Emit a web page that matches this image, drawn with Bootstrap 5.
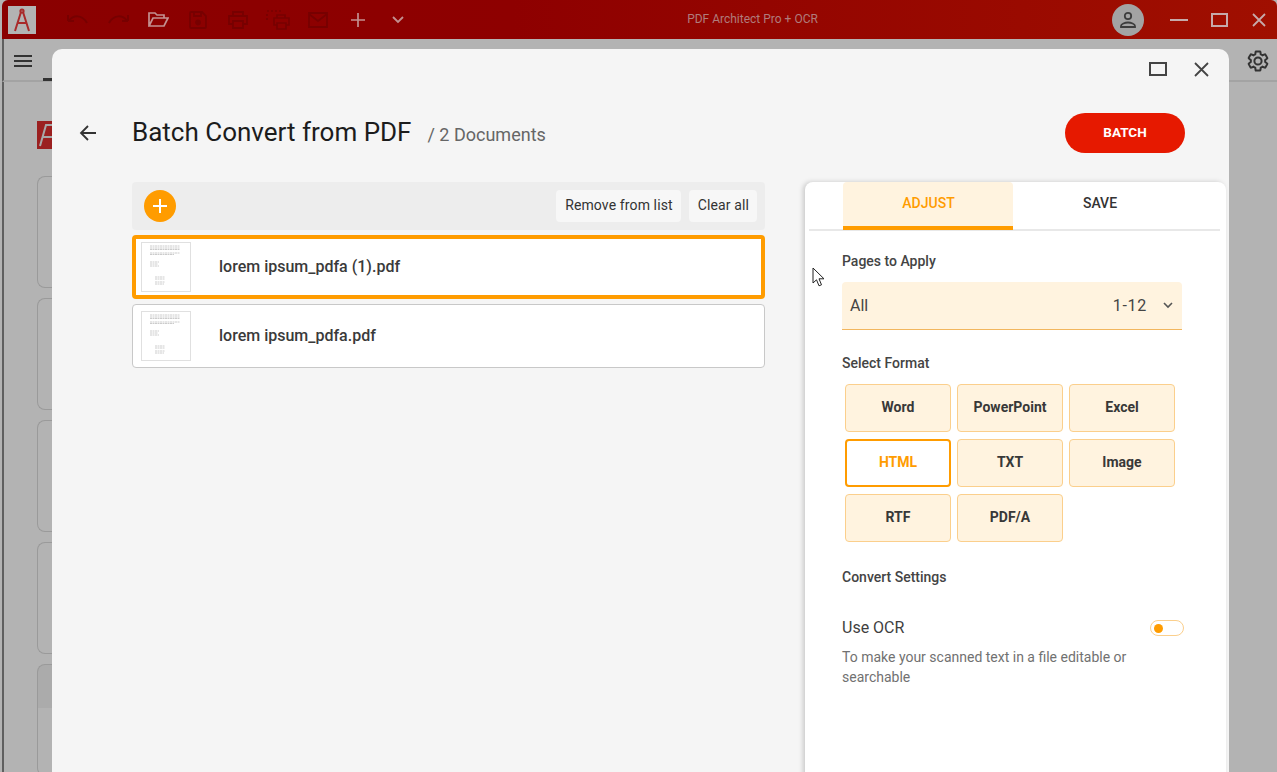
<!DOCTYPE html>
<html lang="en">
<head>
<meta charset="utf-8">
<title>PDF Architect</title>
<link rel="stylesheet" href="https://cdn.jsdelivr.net/npm/bootstrap@5.3.0/dist/css/bootstrap.min.css">
<style>
html,body{height:100%;overflow:hidden}
body{font-family:Roboto,"Liberation Sans",sans-serif;background:#b3b3b3;color:#2b2b2b}
.appwin{width:1277px;height:772px;position:relative;overflow:hidden;background:#b3b3b3}
.titlebar{height:39px;background:linear-gradient(90deg,#8a0000 0,#8e0000 40%,#a00f00 100%);border-radius:6px 6px 0 0;margin-left:2px;padding-left:6px}
.logo-box{width:28px;height:28px;background:#b3b3b3;flex:none}
.tb-first{margin-left:22px}
.tb-icon{width:40px;height:39px;flex:none}
.tb-title{position:absolute;left:228px;right:0;top:0;height:39px;line-height:38px;text-align:center;font-size:12px;color:#b07c7c}
.avatar{width:32px;height:32px;border-radius:50%;background:#a3a3a3;flex:none;margin-right:15px}
.tb-right{margin-right:-2px}
.winbtn{width:40px;height:39px;flex:none}
.subbar{height:43px;border-bottom:2px solid #a3a3a3;margin-left:2px;border-left:2px solid #5f5f5f;padding:2px 7px 0 9px}
.bgbody{border-left:2px solid #5f5f5f;margin-left:2px;height:690px;padding:39px 0 0 33px;position:relative}
.bg-logo{width:18px;height:28px;background:#9b2020;margin-bottom:27px}
.bg-card{width:40px;height:112px;border:1px solid #9a9a9a;border-right:0;border-radius:8px 0 0 8px;margin-bottom:10px}
.bg-card.shaded{background:linear-gradient(#ababab 0,#ababab 43px,transparent 43px)}
.tab-mark{position:absolute;left:43px;top:78px;width:9px;height:3px;background:#333}
.dlg{position:absolute;left:52px;top:49px;width:1177px;height:740px;background:#f5f5f5;border-radius:10px 10px 0 0}
.dlg-top{height:40px;padding:0 8px 0 0}
.dlg-max{margin-right:3px}
.dlg-head{padding:28px 44px 0 24px;height:68px}
.back-btn{width:24px;height:24px;flex:none;margin:4px 32px 0 0}
.dlg-title{font-size:26px;line-height:30px;color:#1c1c1c;margin:0;font-weight:400}
.dlg-sub{font-size:18px;color:#666;margin-left:16px;margin-top:4px}
.batch-btn{width:120px;height:40px;border-radius:20px;background:#e61900;color:#fff;font-size:13.500px;font-weight:700;border:0;padding:0 0 2px;margin-top:-4px}
.dlg-cols{padding-left:80px;gap:40px;margin-top:25px}
.leftcol{width:633px;flex:none}
.list-top{height:48px;background:#ededed;border-radius:4px;padding:0 8px 0 12px}
.add-btn{width:32px;height:32px;border-radius:50%;background:#ff9c00;flex:none}
.list-act{height:32px;background:#f7f7f7;border-radius:4px;font-size:14px;color:#333;padding:0 8px 0 9px;line-height:30px;letter-spacing:.12px}
.fileitem{background:#fff;border:1px solid #c8c8c8;border-radius:4px;height:64px;margin-top:5px;padding-left:8px;font-size:16px;font-weight:500;color:#3a3a3a}
.fileitem.sel{border:4px solid #ff9c00;padding-left:5px}
.thumbbox{width:50px;height:50px;background:#fff;border:1px solid #e0e0e0;flex:none;margin-right:28px}
.rightpane{width:421px;flex:none;background:#fff;border-radius:8px 8px 0 0;box-shadow:-2px 0 5px rgba(0,0,0,.18);height:620px;padding:0 6px 0 4px}
.tabsrow{height:49px;border-bottom:2px solid #e8e8e8;padding-left:34px}
.tabitem{width:170px;height:48px;line-height:42px;text-align:center;font-size:14px;font-weight:500;color:#333;padding-left:4px}
.tabitem.on{background:#fff3df;color:#ff9c00;border-bottom:4px solid #ff9c00;border-radius:4px 4px 0 0;padding-left:1px}
.pane-body{padding:0 0 0 33px}
.sec-label{font-size:14px;font-weight:500;color:#444;line-height:20px}
.sec-fmt{margin-top:23px}
.sec-gap{margin-top:25px}
.pages-sel{width:340px;height:48px;background:#fff3df;border-bottom:1px solid #f2b65e;border-radius:4px 4px 0 0;padding:0 9px 0 8px;font-size:16px;color:#444;margin-top:11px}
.pages-num{letter-spacing:.7px}
.fmt-grid{display:grid;grid-template-columns:repeat(3,106px);grid-auto-rows:48px;gap:7px 6px;margin:11px 0 0 3px}
.fmt-btn{background:#fff3df;border:1px solid #fbcf8c;border-radius:4px;font-size:14px;font-weight:700;color:#383838;text-align:center;line-height:45px}
.fmt-btn.on{background:#fff;border:2px solid #ff9c00;color:#ff9c00;line-height:43px}
.ocr-row{margin-top:30px;width:342px}
.ocr-lab{font-size:16px;color:#3f3f3f;line-height:22px}
.ocr-sw{width:34px;height:16px;border:1px solid #fbcf8c;border-radius:8px;padding-left:3px;background:#fff;flex:none}
.ocr-dot{width:9px;height:9px;border-radius:50%;background:#ff9c00}
.ocr-desc{font-size:14px;line-height:20px;color:#717171;width:300px}
.cursorsvg{position:absolute;left:812px;top:267px}
</style>
</head>
<body>
<div class="appwin">
  <div class="titlebar d-flex align-items-center">
    <div class="logo-box d-flex align-items-center justify-content-center">
      <svg width="18" height="24" viewBox="0 0 18 24" fill="none" stroke="#a92a2a" stroke-width="2"><circle cx="9" cy="3" r="1.6"/><path d="M8 4 2 23M10 4l6 19M4 15h10"/></svg>
    </div>
    <div class="tb-icon tb-first d-flex align-items-center justify-content-center">
      <svg width="22" height="14" viewBox="0 0 22 14" fill="none" stroke="#770000" stroke-width="2"><path d="M1 8V2M1 8h6M2 8c4-6 13-7 18 2"/></svg>
    </div>
    <div class="tb-icon d-flex align-items-center justify-content-center">
      <svg width="22" height="14" viewBox="0 0 22 14" fill="none" stroke="#770000" stroke-width="2"><path d="M21 8V2M21 8h-6M20 8C16 2 7 1 2 10"/></svg>
    </div>
    <div class="tb-icon d-flex align-items-center justify-content-center">
      <svg width="21" height="16" viewBox="0 0 21 16" fill="none" stroke="#c39090" stroke-width="1.7"><path d="M1 14V1h6l2 2h7v3M1 14l4-8h15l-4 8z"/></svg>
    </div>
    <div class="tb-icon d-flex align-items-center justify-content-center">
      <svg width="18" height="18" viewBox="0 0 18 18" fill="none" stroke="#770000" stroke-width="1.8"><path d="M2 1h11l4 4v11a1 1 0 0 1-1 1H2a1 1 0 0 1-1-1V2a1 1 0 0 1 1-1z"/><path d="M5 1v4h7V1"/><circle cx="9" cy="11.500" r="2" fill="#770000"/></svg>
    </div>
    <div class="tb-icon d-flex align-items-center justify-content-center">
      <svg width="20" height="18" viewBox="0 0 20 18" fill="none" stroke="#770000" stroke-width="1.8"><path d="M5 5V1h10v4M5 13H1V5h18v8h-4"/><path d="M5 10h10v7H5z"/></svg>
    </div>
    <div class="tb-icon d-flex align-items-center justify-content-center">
      <svg width="24" height="20" viewBox="0 0 24 20" fill="none" stroke="#770000" stroke-width="1.7"><path d="M1 1h14M1 4v8" stroke-dasharray="2 2"/><path d="M11 8V5h8v3M11 15H8V8h15v7h-3M11 13h9v6h-9z"/></svg>
    </div>
    <div class="tb-icon d-flex align-items-center justify-content-center">
      <svg width="20" height="16" viewBox="0 0 20 16" fill="none" stroke="#770000" stroke-width="1.8"><path d="M1 1h18v14H1zM1 2l9 7 9-7"/></svg>
    </div>
    <div class="tb-icon d-flex align-items-center justify-content-center">
      <svg width="14" height="14" viewBox="0 0 14 14" stroke="#c39090" stroke-width="1.7"><path d="M7 0v14M0 7h14"/></svg>
    </div>
    <div class="tb-icon d-flex align-items-center justify-content-center">
      <svg width="12" height="8" viewBox="0 0 12 8" fill="none" stroke="#c39090" stroke-width="1.8"><path d="m1 1 5 5 5-5"/></svg>
    </div>
    <div class="tb-title">PDF Architect Pro + OCR</div>
    <div class="tb-right ms-auto d-flex align-items-center">
      <div class="avatar d-flex align-items-center justify-content-center">
        <svg width="18" height="18" viewBox="0 0 18 18" fill="none" stroke="#3d3d3d" stroke-width="1.800"><circle cx="9" cy="5" r="3.200"/><path d="M2 16v-1c0-2 4-3.500 7-3.500s7 1.500 7 3.500v1z"/></svg>
      </div>
      <div class="winbtn d-flex align-items-center justify-content-center">
        <svg width="18" height="2" viewBox="0 0 18 2"><path fill="#c6aaaa" d="M0 0h18v2H0z"/></svg>
      </div>
      <div class="winbtn d-flex align-items-center justify-content-center">
        <svg width="17" height="14" viewBox="0 0 17 14" fill="none" stroke="#c6aaaa" stroke-width="2"><path d="M1 1h15v12H1z"/></svg>
      </div>
      <div class="winbtn d-flex align-items-center justify-content-center">
        <svg width="14" height="14" viewBox="0 0 14 14" stroke="#c6aaaa" stroke-width="1.800"><path d="m1 1 12 12M13 1 1 13"/></svg>
      </div>
    </div>
  </div>

  <div class="subbar d-flex align-items-center justify-content-between">
    <svg width="20" height="14" viewBox="0 0 20 14" fill="#333"><path d="M1 1h18v2H1zM1 6h18v2H1zM1 11h18v2H1z"/></svg>
    <svg width="24" height="24" viewBox="0 0 24 24" fill="none" stroke="#333" stroke-width="2"><path d="M19.140 12.940c.04-.3.06-.61.06-.94 0-.32-.02-.64-.07-.94l2.030-1.580c.18-.14.23-.41.12-.61l-1.920-3.320c-.12-.22-.37-.29-.59-.22l-2.390.96c-.5-.38-1.030-.7-1.620-.94l-.36-2.540c-.04-.24-.24-.41-.48-.41h-3.840c-.24 0-.43.17-.47.41l-.36 2.540c-.59.24-1.130.57-1.620.94l-2.390-.96c-.22-.08-.47 0-.59.22L2.740 8.870c-.12.21-.08.47.12.61l2.030 1.580c-.05.3-.09.63-.09.94s.02.64.07.94l-2.030 1.580c-.18.14-.23.41-.12.61l1.920 3.320c.12.22.37.29.59.22l2.390-.96c.5.38 1.030.7 1.620.94l.36 2.540c.05.24.24.41.48.41h3.840c.24 0 .44-.17.47-.41l.36-2.540c.59-.24 1.130-.56 1.620-.94l2.390.96c.22.08.47 0 .59-.22l1.920-3.320c.12-.22.07-.47-.12-.61l-2.010-1.580zM12 15.600c-1.980 0-3.600-1.620-3.600-3.600s1.620-3.600 3.600-3.600 3.600 1.620 3.600 3.600-1.620 3.600-3.600 3.600z"/></svg>
  </div>
  <div class="tab-mark"></div>

  <div class="bgbody">
    <div class="bg-logo d-flex align-items-center justify-content-center">
      <svg width="18" height="28" viewBox="0 0 18 28" fill="none" stroke="#a8a8a8" stroke-width="2"><path d="M3 25 9 4h6M6 16h9"/></svg>
    </div>
    <div class="bg-card"></div>
    <div class="bg-card"></div>
    <div class="bg-card"></div>
    <div class="bg-card"></div>
    <div class="bg-card shaded"></div>
  </div>

  <div class="dlg">
    <div class="dlg-top d-flex align-items-center justify-content-end">
      <div class="winbtn dlg-max d-flex align-items-center justify-content-center">
        <svg width="18" height="14" viewBox="0 0 18 14" fill="none" stroke="#444" stroke-width="2"><path d="M1 1h16v12H1z"/></svg>
      </div>
      <div class="winbtn d-flex align-items-center justify-content-center">
        <svg width="15" height="15" viewBox="0 0 15 15" stroke="#444" stroke-width="1.800"><path d="m1 1 13 13M14 1 1 14"/></svg>
      </div>
    </div>
    <div class="dlg-head d-flex align-items-start">
      <div class="back-btn d-flex align-items-center justify-content-center">
        <svg width="18" height="18" viewBox="0 0 18 18" fill="none" stroke="#333" stroke-width="1.800"><path d="M17 9H2M9 2 2 9l7 7"/></svg>
      </div>
      <h1 class="dlg-title">Batch Convert from PDF</h1>
      <div class="dlg-sub">/ 2 Documents</div>
      <button class="batch-btn ms-auto">BATCH</button>
    </div>
    <div class="dlg-cols d-flex">
      <div class="leftcol">
        <div class="list-top d-flex align-items-center">
          <div class="add-btn d-flex align-items-center justify-content-center">
            <svg width="16" height="16" viewBox="0 0 16 16" stroke="#fff" stroke-width="2"><path d="M8 1v14M1 8h14"/></svg>
          </div>
          <div class="list-act ms-auto me-2">Remove from list</div>
          <div class="list-act">Clear all</div>
        </div>
        <div class="fileitem sel d-flex align-items-center">
          <div class="thumbbox">
            <svg width="48" height="48" viewBox="0 0 48 48" fill="none" stroke="#999" stroke-width=".5" stroke-dasharray="2 .5"><path d="M8 3h30M8 5h30M8 6.500h30M8 10h30M8 11.500h24M8 19h9M8 21h8M8 23h9M13 34h10M13 36h10M13 39h10M13 41h9"/></svg>
          </div>
          <span>lorem ipsum_pdfa (1).pdf</span>
        </div>
        <div class="fileitem d-flex align-items-center">
          <div class="thumbbox">
            <svg width="48" height="48" viewBox="0 0 48 48" fill="none" stroke="#999" stroke-width=".5" stroke-dasharray="2 .5"><path d="M8 3h30M8 5h30M8 6.500h30M8 10h30M8 11.500h24M8 19h9M8 21h8M8 23h9M13 34h10M13 36h10M13 39h10M13 41h9"/></svg>
          </div>
          <span>lorem ipsum_pdfa.pdf</span>
        </div>
      </div>
      <div class="rightpane">
        <div class="tabsrow d-flex">
          <div class="tabitem on">ADJUST</div>
          <div class="tabitem">SAVE</div>
        </div>
        <div class="pane-body">
          <div class="sec-label mt-3 pt-1">Pages to Apply</div>
          <div class="pages-sel d-flex align-items-center justify-content-between">
            <span>All</span>
            <span class="d-flex align-items-center gap-3"><span class="pages-num">1-12</span>
              <svg width="10" height="7" viewBox="0 0 10 7" fill="none" stroke="#555" stroke-width="1.600"><path d="m1 1 4 4 4-4"/></svg>
            </span>
          </div>
          <div class="sec-label sec-fmt">Select Format</div>
          <div class="fmt-grid">
            <div class="fmt-btn">Word</div>
            <div class="fmt-btn">PowerPoint</div>
            <div class="fmt-btn">Excel</div>
            <div class="fmt-btn on">HTML</div>
            <div class="fmt-btn">TXT</div>
            <div class="fmt-btn">Image</div>
            <div class="fmt-btn">RTF</div>
            <div class="fmt-btn">PDF/A</div>
          </div>
          <div class="sec-label sec-gap">Convert Settings</div>
          <div class="ocr-row d-flex align-items-center justify-content-between">
            <div class="ocr-lab">Use OCR</div>
            <div class="ocr-sw d-flex align-items-center"><div class="ocr-dot"></div></div>
          </div>
          <div class="ocr-desc mt-2">To make your scanned text in a file editable or searchable</div>
        </div>
      </div>
    </div>
  </div>
  <svg class="cursorsvg" width="13" height="21" viewBox="0 0 13 21" fill="#fff" stroke="#222" stroke-width="1"><path d="M1 1v15l3.500-3.200 2.500 6 2.500-1-2.500-6h5z"/></svg>
</div>
<script src="https://cdn.jsdelivr.net/npm/bootstrap@5.3.0/dist/js/bootstrap.bundle.min.js"></script>
</body>
</html>
